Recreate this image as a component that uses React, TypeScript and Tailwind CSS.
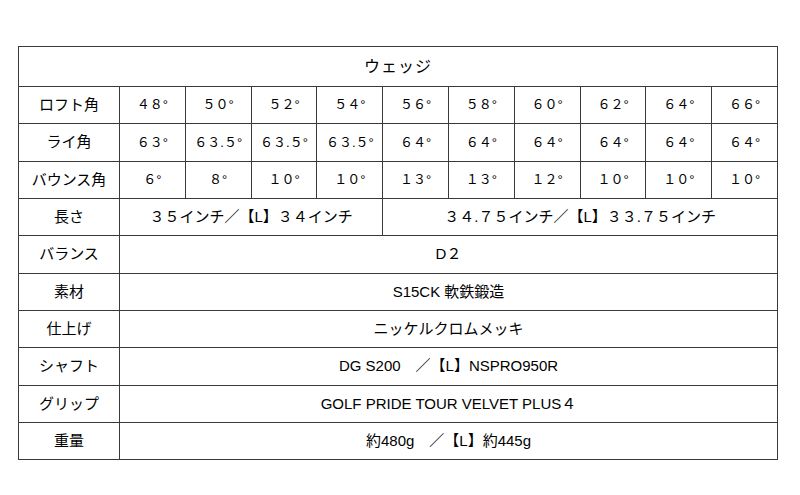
import React from "react";

const font = { fontFamily: '"Liberation Sans", "Noto Sans CJK JP", sans-serif' };

const loft = ["４８°", "５０°", "５２°", "５４°", "５６°", "５８°", "６０°", "６２°", "６４°", "６６°"];
const lie = ["６３°", "６３.５°", "６３.５°", "６３.５°", "６４°", "６４°", "６４°", "６４°", "６４°", "６４°"];
const bounce = ["６°", "８°", "１０°", "１０°", "１３°", "１３°", "１２°", "１０°", "１０°", "１０°"];

const cell = "border border-[#3a3a3a] text-center align-middle p-0";
const rowH = "h-[37.35px]";

function DegRow({ label, values }: { label: string; values: string[] }) {
  return (
    <tr className={rowH}>
      <td className={`${cell} text-[15px]`}>{label}</td>
      {values.map((v, i) => (
        <td key={i} className={`${cell} text-[13px]`}>
          {v}
        </td>
      ))}
    </tr>
  );
}

function WideRow({ label, value }: { label: string; value: string }) {
  return (
    <tr className={rowH}>
      <td className={`${cell} text-[15px]`}>{label}</td>
      <td colSpan={10} className={`${cell} text-[15px]`}>
        {value}
      </td>
    </tr>
  );
}

export default function App() {
  return (
    <div className="w-[800px] h-[495px] bg-white pt-[46px] pl-[18px] text-black" style={font}>
      <table className="w-[760px] table-fixed border-collapse border border-[#111]">
        <colgroup>
          <col className="w-[101px]" />
          {Array.from({ length: 10 }).map((_, i) => (
            <col key={i} />
          ))}
        </colgroup>
        <tbody>
          <tr className="h-[40px]">
            <td colSpan={11} className={`${cell} text-[16px] tracking-[1px]`}>
              ウェッジ
            </td>
          </tr>
          <DegRow label="ロフト角" values={loft} />
          <DegRow label="ライ角" values={lie} />
          <DegRow label="バウンス角" values={bounce} />
          <tr className={rowH}>
            <td className={`${cell} text-[15px]`}>長さ</td>
            <td colSpan={4} className={`${cell} text-[15px]`}>
              ３５インチ／【L】３４インチ
            </td>
            <td colSpan={6} className={`${cell} text-[15px]`}>
              ３４.７５インチ／【L】３３.７５インチ
            </td>
          </tr>
          <WideRow label="バランス" value="D２" />
          <WideRow label="素材" value="S15CK 軟鉄鍛造" />
          <WideRow label="仕上げ" value="ニッケルクロムメッキ" />
          <WideRow label="シャフト" value="DG S200　／【L】NSPRO950R" />
          <WideRow label="グリップ" value="GOLF PRIDE TOUR VELVET PLUS４" />
          <WideRow label="重量" value="約480g　／【L】約445g" />
        </tbody>
      </table>
    </div>
  );
}
